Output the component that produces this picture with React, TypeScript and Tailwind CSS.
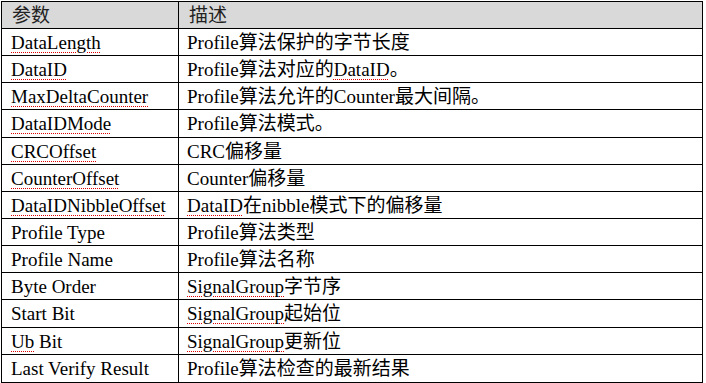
import React from "react";

type Seg = { t: string; u?: boolean };
type Row = { k: Seg[]; v: Seg[] };

const rows: Row[] = [
  { k: [{ t: "DataLength", u: true }], v: [{ t: "Profile算法保护的字节长度" }] },
  { k: [{ t: "DataID", u: true }], v: [{ t: "Profile算法对应的" }, { t: "DataID", u: true }, { t: "。" }] },
  { k: [{ t: "MaxDeltaCounter", u: true }], v: [{ t: "Profile算法允许的Counter最大间隔。" }] },
  { k: [{ t: "DataIDMode", u: true }], v: [{ t: "Profile算法模式。" }] },
  { k: [{ t: "CRCOffset", u: true }], v: [{ t: "CRC偏移量" }] },
  { k: [{ t: "CounterOffset", u: true }], v: [{ t: "Counter偏移量" }] },
  { k: [{ t: "DataIDNibbleOffset", u: true }], v: [{ t: "DataID", u: true }, { t: "在nibble模式下的偏移量" }] },
  { k: [{ t: "Profile Type" }], v: [{ t: "Profile算法类型" }] },
  { k: [{ t: "Profile Name" }], v: [{ t: "Profile算法名称" }] },
  { k: [{ t: "Byte Order" }], v: [{ t: "SignalGroup", u: true }, { t: "字节序" }] },
  { k: [{ t: "Start Bit" }], v: [{ t: "SignalGroup", u: true }, { t: "起始位" }] },
  { k: [{ t: "Ub", u: true }, { t: " Bit" }], v: [{ t: "SignalGroup", u: true }, { t: "更新位" }] },
  { k: [{ t: "Last Verify Result" }], v: [{ t: "Profile算法检查的最新结果" }] },
];

function Text({ segs }: { segs: Seg[] }) {
  return (
    <>
      {segs.map((s, i) =>
        s.u ? (
          <span
            key={i}
            className="underline decoration-dotted decoration-[#e00000] decoration-[1px] underline-offset-[3px]"
          >
            {s.t}
          </span>
        ) : (
          <span key={i}>{s.t}</span>
        )
      )}
    </>
  );
}

export default function App() {
  return (
    <div className="w-[706px] h-[383px] bg-white overflow-hidden">
      <div
        className="ml-[1px] mt-[1px] w-[702px] border border-black text-black text-[19px] leading-[21px]"
        style={{ fontFamily: '"Liberation Serif", "Noto Sans CJK SC", serif' }}
      >
        <div className="flex h-[27px] border-b border-black bg-[#d9d9d9] text-[#222]">
          <div className="w-[177px] shrink-0 border-r border-black pl-[10px] pt-[3px]">参数</div>
          <div className="flex-1 pl-[10px] pt-[3px]">描述</div>
        </div>
        {rows.map((r, i) => (
          <div
            key={i}
            className={
              i === rows.length - 1
                ? "flex h-[27.15px]"
                : "flex h-[27.15px] border-b border-black"
            }
          >
            <div className="w-[177px] shrink-0 border-r border-black pl-[9px] pt-[3px] whitespace-nowrap">
              <Text segs={r.k} />
            </div>
            <div className="flex-1 pl-[8px] pt-[3px] whitespace-nowrap">
              <Text segs={r.v} />
            </div>
          </div>
        ))}
      </div>
    </div>
  );
}
